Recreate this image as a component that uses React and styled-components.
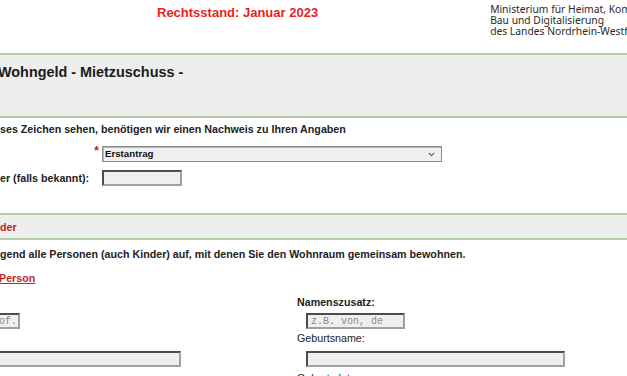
import React from 'react';
import styled, { createGlobalStyle } from 'styled-components';

// === STYLES === //

const GlobalStyle = createGlobalStyle`
  html, body {
    margin: 0;
    padding: 0;
    background: #fff;
    overflow: hidden;
  }
  body {
    font-family: "Liberation Sans", Arial, sans-serif;
    color: #222;
  }
`;

const Page = styled.div`
  width: 627px;
  height: 376px;
  overflow: hidden;
`;

const Header = styled.div`
  display: flex;
  align-items: flex-start;
  height: 53px;
`;

const Rechtsstand = styled.div`
  padding: 5px 0 0 157px;
  font-size: 13px;
  line-height: 16px;
  font-weight: bold;
  color: #ee1c1c;
  white-space: nowrap;
`;

const Ministry = styled.div`
  margin-left: 172px;
  padding-top: 4px;
  flex-shrink: 0;
  font-family: "Noto Sans", "Open Sans", sans-serif;
  font-size: 10.3px;
  line-height: 11px;
  color: #2a2a2a;
  white-space: nowrap;
`;

const Band = styled.div`
  background: #eeeeee;
  border-top: 2px solid #b3cda8;
  border-bottom: 2px solid #b3cda8;
  height: ${(props) => props.h}px;
  margin-top: ${(props) => props.top || 0}px;
  box-sizing: content-box;
`;

const Title = styled.h1`
  margin: 0 0 0 -2px;
  padding-top: 8px;
  font-size: 14.4px;
  line-height: 18px;
  font-weight: bold;
  color: #1a1a1a;
  white-space: nowrap;
`;

const BandLabel = styled.div`
  padding-top: 5px;
  font-size: 10.7px;
  line-height: 14px;
  font-weight: bold;
  color: #c0262c;
`;

const Note = styled.p`
  margin: ${(props) => props.top}px 0 0 0;
  font-size: 10.7px;
  line-height: 14px;
  font-weight: bold;
  white-space: nowrap;
`;

const FormGrid = styled.div`
  display: grid;
  grid-template-columns: 102px 1fr;
  row-gap: 8px;
  margin: 10px 0 0 0;
  align-items: center;
`;

const Label = styled.div`
  font-size: 10.7px;
  line-height: 14px;
  font-weight: bold;
  white-space: nowrap;
  text-align: ${(props) => (props.required ? 'right' : 'left')};
  padding-right: 3px;
`;

const Star = styled.span`
  color: #d42020;
  font-size: 12px;
  position: relative;
  top: -3px;
`;

const SelectBox = styled.div`
  position: relative;
  width: 340px;
  height: 16px;
  box-sizing: border-box;
  background: #efefef;
  border: 1px solid #8a8a8a;
  box-shadow: inset 1px 1px 0 #b8b8b8;
  font-size: 9.7px;
  line-height: 14px;
  font-weight: bold;
  color: #111;
  padding-left: 2px;
`;

const Chevron = styled.svg`
  position: absolute;
  right: 6px;
  top: 5px;
`;

const TextInput = styled.input`
  display: block;
  width: ${(props) => props.w}px;
  height: 16px;
  box-sizing: border-box;
  margin: ${(props) => props.m || '0'};
  padding: 0 3px;
  background: #efefef;
  border: 2px inset #a0a0a0;
  border-radius: 0;
  font-family: "Liberation Mono", "Courier New", monospace;
  font-size: 10px;
  color: #555;
  outline: none;
  &::placeholder {
    color: #8a8a8a;
  }
`;

const SectionLink = styled.div`
  margin: 10px 0 0 -1px;
  font-size: 10.7px;
  line-height: 14px;
  font-weight: bold;
  color: #c0262c;
  text-decoration: underline;
`;

const PersonGrid = styled.div`
  display: grid;
  grid-template-columns: 384px 1fr;
  margin: 10px 0 0 -87px;
`;

const Column = styled.div`
  display: flex;
  flex-direction: column;
`;

const FieldLabel = styled.div`
  height: 14px;
  font-size: 10.7px;
  line-height: 14px;
  font-weight: ${(props) => (props.bold ? 'bold' : 'normal')};
  color: #222;
  margin-top: ${(props) => props.top || 0}px;
  margin-bottom: ${(props) => props.bottom || 0}px;
  white-space: nowrap;
`;

// ===  COMPONENT DEFINITION ===  //

export default function App() {
  return (
    <Page>
      <GlobalStyle />
      <Header>
        <Rechtsstand>Rechtsstand: Januar 2023</Rechtsstand>
        <Ministry>
          Ministerium für Heimat, Kommunales,
          <br />
          Bau und Digitalisierung
          <br />
          des Landes Nordrhein-Westfalen
        </Ministry>
      </Header>

      <Band h={61}>
        <Title>Wohngeld - Mietzuschuss -</Title>
      </Band>

      <Note top={4}>ses Zeichen sehen, benötigen wir einen Nachweis zu Ihren Angaben</Note>

      <FormGrid>
        <Label required>
          <Star>*</Star>
        </Label>
        <SelectBox>
          Erstantrag
          <Chevron width="7" height="5" viewBox="0 0 7 5">
            <path d="M0.8 0.8 L3.5 3.6 L6.2 0.8" fill="none" stroke="#666" strokeWidth="1.2" />
          </Chevron>
        </SelectBox>
        <Label>er (falls bekannt):</Label>
        <TextInput w={80} />
      </FormGrid>

      <Band h={23} top={27}>
        <BandLabel>der</BandLabel>
      </Band>

      <Note top={7}>
        gend alle Personen (auch Kinder) auf, mit denen Sie den Wohnraum gemeinsam bewohnen.
      </Note>

      <SectionLink>Person</SectionLink>

      <PersonGrid>
        <Column>
          <FieldLabel bold bottom={4}>Titel:</FieldLabel>
          <TextInput w={98} m="0 0 0 9px" placeholder="z.B. Dr., Prof." />
          <FieldLabel top={2} bottom={6}>Vorname:</FieldLabel>
          <TextInput w={259} m="0 0 0 9px" />
        </Column>
        <Column>
          <FieldLabel bold bottom={4}>Namenszusatz:</FieldLabel>
          <TextInput w={99} m="0 0 0 9px" placeholder="z.B. von, de" />
          <FieldLabel top={2} bottom={6}>Geburtsname:</FieldLabel>
          <TextInput w={259} m="0 0 0 9px" />
          <FieldLabel top={4}>Geburtsdatum:</FieldLabel>
        </Column>
      </PersonGrid>
    </Page>
  );
}
